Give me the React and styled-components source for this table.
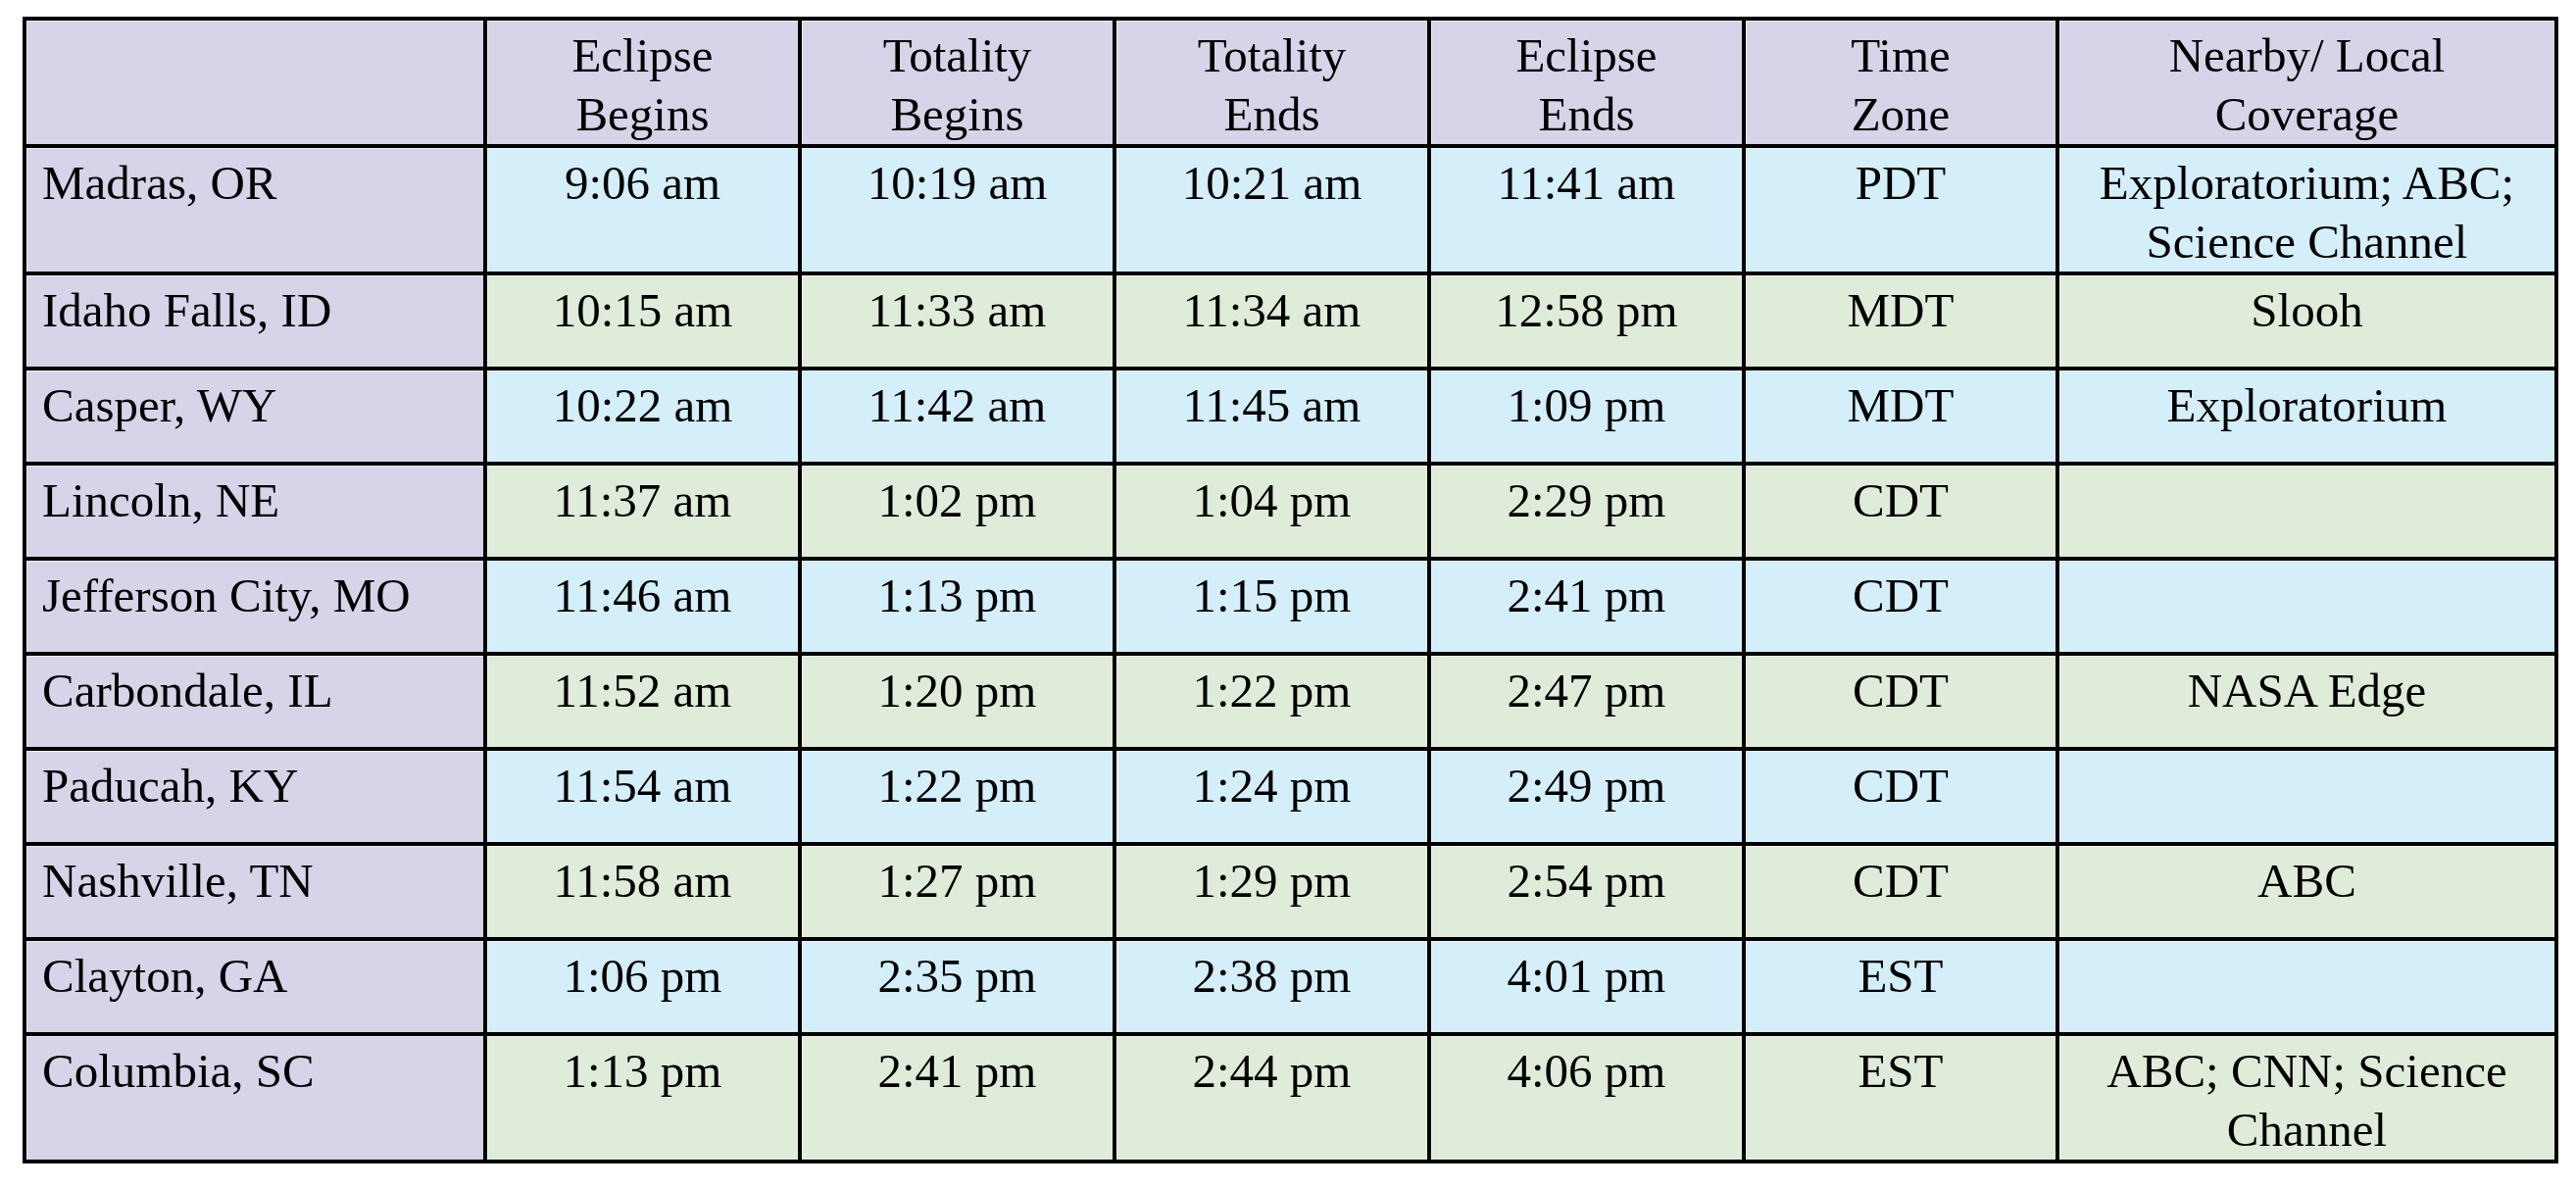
import React from 'react'
import styled, { createGlobalStyle } from 'styled-components'

const GlobalStyle = createGlobalStyle`
  html, body {
    margin: 0;
    padding: 0;
    background: #ffffff;
  }
  body {
    font-family: "Liberation Serif", "Times New Roman", serif;
    color: #000;
  }
`

const colors = {
  lavender: '#d5d4e8',
  blue: '#d4eefa',
  green: '#e0ecda'
}

const Page = styled.div`
  padding: 17px 0 0 23px;
`

const Grid = styled.div`
  display: grid;
  grid-template-columns: 466px repeat(4, 317px) 316px 505px;
  gap: 4px;
  padding: 4px;
  width: max-content;
  background: #000;
`

const Cell = styled.div`
  box-sizing: border-box;
  min-height: ${props => (props.head ? '125px' : '93px')};
  padding: 6px ${props => (props.left ? '16px' : '10px')} 0;
  background: ${props => colors[props.tone]};
  box-shadow: inset 1px 1px 0 rgba(255, 255, 255, 0.55);
  font-size: 49px;
  line-height: 60px;
  text-align: ${props => (props.left ? 'left' : 'center')};
`

const headers = [
  '',
  'Eclipse Begins',
  'Totality Begins',
  'Totality Ends',
  'Eclipse Ends',
  'Time Zone',
  'Nearby/ Local Coverage'
]

const headerLines = {
  'Eclipse Begins': ['Eclipse', 'Begins'],
  'Totality Begins': ['Totality', 'Begins'],
  'Totality Ends': ['Totality', 'Ends'],
  'Eclipse Ends': ['Eclipse', 'Ends'],
  'Time Zone': ['Time', 'Zone'],
  'Nearby/ Local Coverage': ['Nearby/ Local', 'Coverage']
}

const rows = [
  ['Madras, OR', '9:06 am', '10:19 am', '10:21 am', '11:41 am', 'PDT', 'Exploratorium; ABC; Science Channel'],
  ['Idaho Falls, ID', '10:15 am', '11:33 am', '11:34 am', '12:58 pm', 'MDT', 'Slooh'],
  ['Casper, WY', '10:22 am', '11:42 am', '11:45 am', '1:09 pm', 'MDT', 'Exploratorium'],
  ['Lincoln, NE', '11:37 am', '1:02 pm', '1:04 pm', '2:29 pm', 'CDT', ''],
  ['Jefferson City, MO', '11:46 am', '1:13 pm', '1:15 pm', '2:41 pm', 'CDT', ''],
  ['Carbondale, IL', '11:52 am', '1:20 pm', '1:22 pm', '2:47 pm', 'CDT', 'NASA Edge'],
  ['Paducah, KY', '11:54 am', '1:22 pm', '1:24 pm', '2:49 pm', 'CDT', ''],
  ['Nashville, TN', '11:58 am', '1:27 pm', '1:29 pm', '2:54 pm', 'CDT', 'ABC'],
  ['Clayton, GA', '1:06 pm', '2:35 pm', '2:38 pm', '4:01 pm', 'EST', ''],
  ['Columbia, SC', '1:13 pm', '2:41 pm', '2:44 pm', '4:06 pm', 'EST', 'ABC; CNN; Science Channel']
]

const HeaderText = ({ label }) => {
  const lines = headerLines[label]
  if (!lines) return null
  return (
    <>
      {lines[0]}
      <br />
      {lines[1]}
    </>
  )
}

export default function App () {
  return (
    <Page>
      <GlobalStyle />
      <Grid>
        {headers.map((h, i) => (
          <Cell key={'h' + i} head tone='lavender'>
            <HeaderText label={h} />
          </Cell>
        ))}
        {rows.map((row, r) =>
          row.map((value, c) => (
            <Cell
              key={r + '-' + c}
              left={c === 0}
              tone={c === 0 ? 'lavender' : r % 2 === 0 ? 'blue' : 'green'}
            >
              {value}
            </Cell>
          ))
        )}
      </Grid>
    </Page>
  )
}
